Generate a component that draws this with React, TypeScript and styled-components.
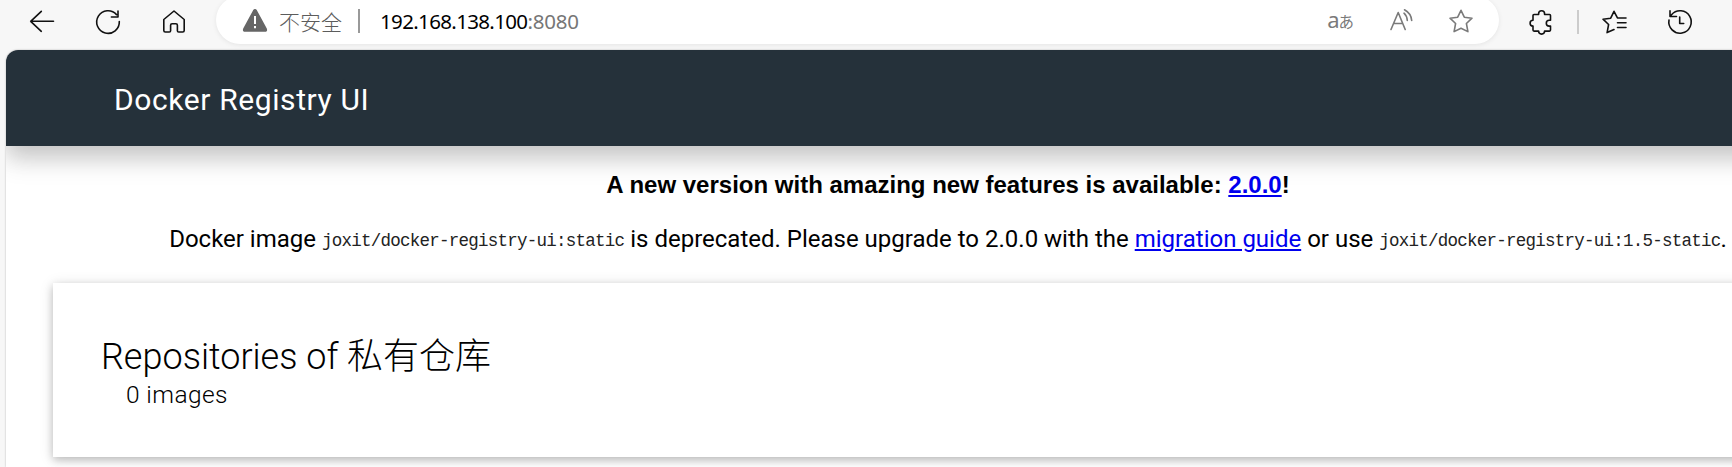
import React from "react";
import styled, { createGlobalStyle } from "styled-components";

const Global = createGlobalStyle`
  html, body { margin: 0; height: 100%; overflow: hidden; background: #f7f7f7; }
`;

const Window = styled.div`
  display: flex;
  flex-direction: column;
  width: 1732px;
  height: 467px;
  overflow: hidden;
  background: #f7f7f7;
`;

const Toolbar = styled.div`
  display: flex;
  align-items: flex-start;
  height: 50px;
  flex: none;
`;

const ToolGroup = styled.div<{ $start: number; $gap: number }>`
  display: flex;
  gap: ${(p) => p.$gap}px;
  padding: 9.5px 0 0 ${(p) => p.$start}px;
`;

const Icon = styled.svg<{ $tone?: string }>`
  display: block;
  flex: none;
  width: 24px;
  height: 24px;
  overflow: visible;
  fill: none;
  stroke: ${(p) => p.$tone || "#111"};
  stroke-width: 1.6;
  stroke-linecap: round;
  stroke-linejoin: round;
`;

const AddressBar = styled.div`
  display: flex;
  box-sizing: border-box;
  width: 1283px;
  height: 48px;
  margin: -4px 0 0 30px;
  padding: 13px 26px 0 27px;
  border-radius: 24px;
  background: #fff;
  box-shadow: 0 1px 5px rgba(0, 0, 0, 0.08);
`;

const Insecure = styled.span`
  margin-left: 12px;
  font: 300 21px/24px "Noto Sans CJK SC", sans-serif;
  color: #5c5c5c;
`;

const Divider = styled.span<{ $color: string; $left: number }>`
  flex: none;
  width: 2px;
  height: 24px;
  margin-left: ${(p) => p.$left}px;
  background: ${(p) => p.$color};
`;

const Url = styled.span`
  flex: 1;
  margin-left: 20px;
  font: 400 20.5px/25px "Noto Sans", sans-serif;
  letter-spacing: -0.65px;
  color: #000;
`;

const Port = styled.span`
  letter-spacing: -0.25px;
  color: #767676;
`;

const AddressTools = styled.div`
  display: flex;
  align-items: flex-start;
  gap: 36px;
`;

const Translate = styled.span`
  display: flex;
  align-items: baseline;
  justify-content: flex-end;
  width: 26px;
  height: 24px;
  margin-right: -1px;
  font: 400 22px/20px "Noto Sans", sans-serif;
  color: #7a7a7a;
`;

const Kana = styled.span`
  font: 400 15.5px/20px "Noto Sans CJK JP", sans-serif;
  margin-left: -1px;
`;

const Page = styled.div`
  flex: 1;
  width: 1884px;
  margin-left: 6px;
  border-radius: 12px 0 0 0;
  overflow: hidden;
  background: #fff;
  box-shadow: 0 0 2px rgba(0, 0, 0, 0.3);
`;

const Header = styled.header`
  display: flex;
  align-items: center;
  box-sizing: border-box;
  height: 96px;
  padding: 4px 0 0 108px;
  background: #25313a;
  box-shadow: 0 16px 24px rgba(0, 0, 0, 0.12), 0 7px 22px rgba(0, 0, 0, 0.14);
`;

const Title = styled.h1`
  margin: 0;
  font: 400 30px/36px Roboto, sans-serif;
  letter-spacing: 0.6px;
  color: #fff;
`;

const Notice = styled.p`
  margin: 24px 0 0;
  text-align: center;
  white-space: nowrap;
  font: 400 24px/30px Roboto, sans-serif;
  color: #000;
`;

const Headline = styled(Notice)`
  font: 700 24px/30px "Liberation Sans", sans-serif;
`;

const Link = styled.a`
  color: #0000ee;
  text-decoration: underline;
`;

const Code = styled.code`
  font: 400 17.5px/20px "Liberation Mono", monospace;
  letter-spacing: -0.75px;
  vertical-align: 1px;
  color: #222;
`;

const Card = styled.section`
  box-sizing: border-box;
  height: 174px;
  margin: 29px 47px 0;
  padding: 50px 0 0 48px;
  background: #fff;
  box-shadow: 0 3px 8px rgba(0, 0, 0, 0.2), 0 2px 14px rgba(0, 0, 0, 0.12);
`;

const CardTitle = styled.h2`
  margin: 0;
  font: 300 36px/48px Roboto, "Noto Sans CJK SC", sans-serif;
  color: #000;
`;

const Count = styled.div`
  padding-left: 25px;
  font: 300 24.5px/28px Roboto, sans-serif;
  letter-spacing: 0.4px;
  color: #000;
`;

export default function App() {
  return (
    <Window>
      <Global />
      <Toolbar>
        <ToolGroup $start={30} $gap={42}>
          <Icon viewBox="0 0 24 24"><path d="M23.5 11.3H.7M11.3 1.3.7 11.3l10.6 10" /></Icon>
          <Icon viewBox="0 0 24 24"><path d="M23.3 11.5A11.3 11.3 0 1 1 20.5 4.6M22 1v6h-6.6" /></Icon>
          <Icon viewBox="0 0 24 24"><path d="M1.8 9.5 12 1l10.2 8.5V20.5q0 1.5-1.5 1.5h-4q-1.3 0-1.3-1.3v-5.5q0-1.5-1.5-1.5h-3.8q-1.5 0-1.5 1.5v5.5q0 1.3-1.3 1.3h-4q-1.5 0-1.5-1.5z" /></Icon>
        </ToolGroup>
        <AddressBar>
          <Icon viewBox="0 0 24 24" $tone="#666">
            <path fill="#666" d="M10.7 1.8q1.3-2 2.6 0l9.8 18.2q.8 2-1.3 2H2.2q-2.1 0-1.3-2z" />
            <path stroke="#fff" strokeWidth="2" strokeLinecap="butt" d="M12 7v8m0 2v2.3" />
          </Icon>
          <Insecure>不安全</Insecure>
          <Divider $color="#999" $left={16} />
          <Url>192.168.138.100<Port>:8080</Port></Url>
          <AddressTools>
            <Translate>a<Kana>あ</Kana></Translate>
            <Icon viewBox="0 0 24 24" $tone="#7a7a7a"><path d="M2 20.5 9.2 3.5l7 17M4.7 14.5h9M15 4.2q3 2.7 3.3 7.3M15.5.8q6.7 3.7 7.2 10.7" /></Icon>
            <Icon viewBox="0 0 24 24" $tone="#7a7a7a"><path d="m12 1.3 3.3 6.9 7.7 1-5.6 5.3 1.5 8.1-6.9-3.4-6.9 3.4 1.5-8.1L1 9.2l7.7-1z" /></Icon>
          </AddressTools>
        </AddressBar>
        <ToolGroup $start={30} $gap={0}>
          <Icon viewBox="0 0 24 24"><path d="M5 4.5h4.6V3.7a3 3 0 0 1 6 0v.8h4.9q1 0 1 1v4.8h-1.3a2.9 2.9 0 0 0 0 5.8h1.3v4q0 1-1 1h-4.9a3 3 0 0 1-6 0H5q-1 0-1-1v-4a2.9 2.9 0 0 1 0-5.8V5.5q0-1 1-1z" /></Icon>
          <Divider $color="#ccc" $left={24} />
        </ToolGroup>
        <ToolGroup $start={22.5} $gap={42.5}>
          <Icon viewBox="0 0 24 24"><path d="M12 19.5 5.1 22.6l1.5-8.1L1 9.2l7.7-1L12 1.3l3.3 6.4M15.5 8H24M15.5 12.8H24M15.5 17.5H24" /></Icon>
          <Icon viewBox="0 0 24 24"><path d="M1 10a11.2 11.2 0 1 0 2.5-5.3L2 6.5M2 .8V6.5h6.5M11.7 7v6.5h4" /></Icon>
        </ToolGroup>
      </Toolbar>
      <Page>
        <Header><Title>Docker Registry UI</Title></Header>
        <Headline>A new version with amazing new features is available: <Link>2.0.0</Link>!</Headline>
        <Notice>
          Docker image <Code>joxit/docker-registry-ui:static</Code> is deprecated. Please upgrade to 2.0.0 with the <Link>migration guide</Link> or use <Code>joxit/docker-registry-ui:1.5-static</Code>.
        </Notice>
        <Card>
          <CardTitle>Repositories of 私有仓库</CardTitle>
          <Count>0 images</Count>
        </Card>
      </Page>
    </Window>
  );
}
